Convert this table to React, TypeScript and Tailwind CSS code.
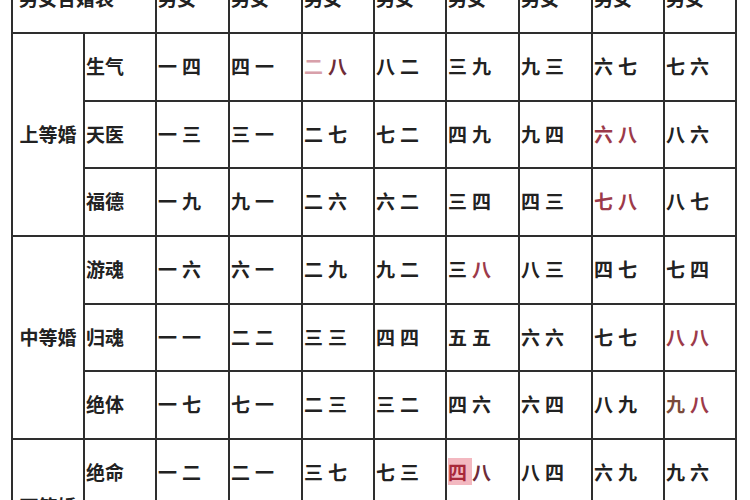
import React from "react";

type Seg = { t: string; c?: string; bg?: string };
type Cell = string | Seg[];

const RED = "text-[#9c3a4a]";
const PINK = "text-[#d8a0aa]";

const groups: { name: string; rows: { label: string; h: string; cells: Cell[] }[] }[] = [
  {
    name: "上等婚",
    rows: [
      { label: "生气", h: "h-[68px]", cells: ["一四", "四一", [{ t: "二", c: PINK }, { t: "八", c: "text-[#6e2c38]" }], "八二", "三九", "九三", "六七", "七六"] },
      { label: "天医", h: "h-[67px]", cells: ["一三", "三一", "二七", "七二", "四九", "九四", [{ t: "六", c: RED }, { t: "八", c: RED }], "八六"] },
      { label: "福德", h: "h-[68px]", cells: ["一九", "九一", "二六", "六二", "三四", "四三", [{ t: "七", c: RED }, { t: "八", c: RED }], "八七"] },
    ],
  },
  {
    name: "中等婚",
    rows: [
      { label: "游魂", h: "h-[68px]", cells: ["一六", "六一", "二九", "九二", [{ t: "三" }, { t: "八", c: RED }], "八三", "四七", "七四"] },
      { label: "归魂", h: "h-[67px]", cells: ["一一", "二二", "三三", "四四", "五五", "六六", "七七", [{ t: "八", c: RED }, { t: "八", c: RED }]] },
      { label: "绝体", h: "h-[68px]", cells: ["一七", "七一", "二三", "三二", "四六", "六四", "八九", [{ t: "九", c: "text-[#7a4a3a]" }, { t: "八", c: RED }]] },
    ],
  },
  {
    name: "下等婚",
    rows: [
      { label: "绝命", h: "h-[68px]", cells: ["一二", "二一", "三七", "七三", [{ t: "四", c: "text-[#a8283a]", bg: "bg-[#f3b8c0]" }, { t: "八", c: "text-[#6e2c38]" }], "八四", "六九", "九六"] },
      { label: "五鬼", h: "h-[68px]", cells: ["一八", "八一", "二四", "四二", "三六", "六三", "七九", "九七"] },
    ],
  },
];

const widths = ["w-[72px]", "w-[72px]", "w-[73px]", "w-[73px]", "w-[72px]", "w-[72px]", "w-[73px]", "w-[73px]", "w-[72px]", "w-[72px]"];

function Content({ cell }: { cell: Cell }) {
  if (typeof cell === "string") {
    return <span className="tracking-[5px]">{cell}</span>;
  }
  return (
    <span className="tracking-[5px]">
      {cell.map((s, i) => (
        <span key={i} className={`${s.c ?? ""} ${s.bg ?? ""}`}>
          {s.t}
        </span>
      ))}
    </span>
  );
}

export default function App() {
  const td = "border-2 border-[#2e2e2e] align-middle p-0 pb-[3px]";
  return (
    <div
      className="w-[750px] h-[500px] overflow-hidden bg-white text-[#222] text-[19px] font-semibold leading-none"
      style={{ fontFamily: '"Noto Sans CJK SC", "Noto Sans", sans-serif' }}
    >
      <table className="ml-[11px] mt-[-36px] table-fixed border-collapse w-[726px]">
        <colgroup>
          {widths.map((w, i) => (
            <col key={i} className={w} />
          ))}
        </colgroup>
        <tbody>
          <tr className="h-[68px]">
            <td colSpan={2} className={`${td} text-left pl-[6px] pb-[3px]`}>男女合婚表</td>
            {Array.from({ length: 8 }).map((_, i) => (
              <td key={i} className={`${td} text-left pl-[1px] pb-[3px]`}>
                男女
              </td>
            ))}
          </tr>
          {groups.map((g) =>
            g.rows.map((r, ri) => (
              <tr key={g.name + r.label} className={r.h}>
                {ri === 0 && (
                  <td rowSpan={g.rows.length} className={`${td} text-center whitespace-nowrap`}>
                    {g.name}
                  </td>
                )}
                <td className={`${td} text-left pl-[1px]`}>{r.label}</td>
                {r.cells.map((c, ci) => (
                  <td key={ci} className={`${td} text-left pl-[1px]`}>
                    <Content cell={c} />
                  </td>
                ))}
              </tr>
            ))
          )}
        </tbody>
      </table>
    </div>
  );
}
